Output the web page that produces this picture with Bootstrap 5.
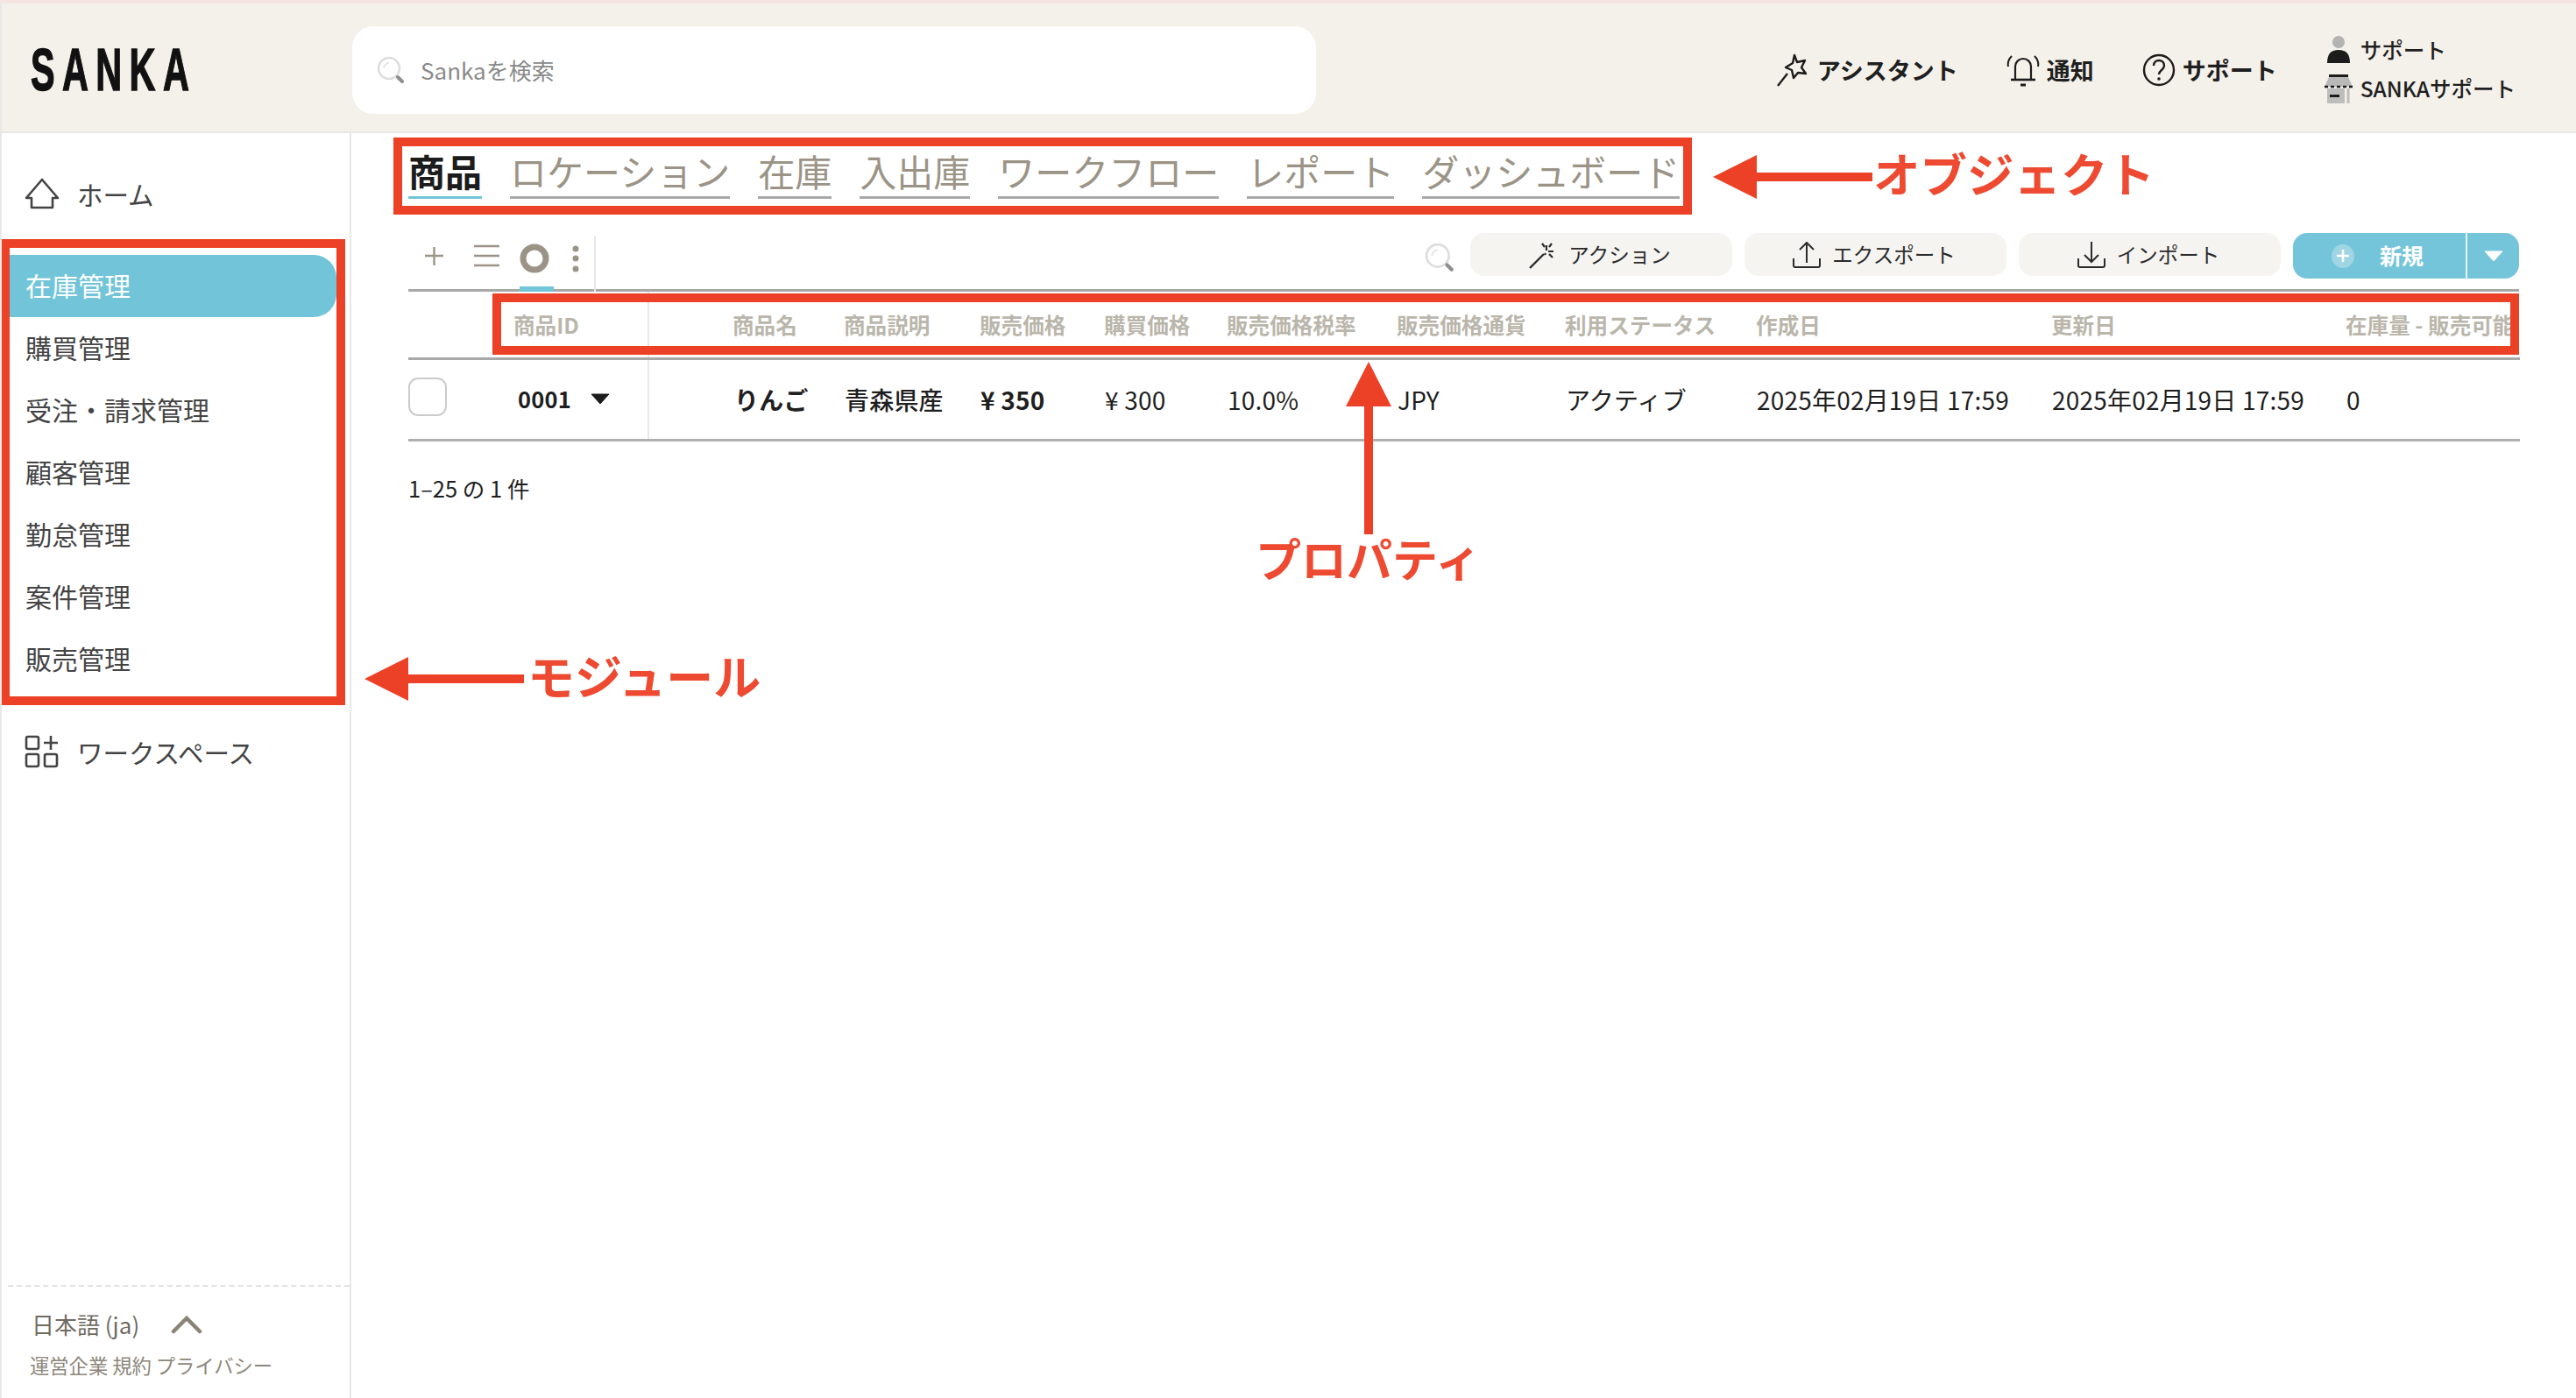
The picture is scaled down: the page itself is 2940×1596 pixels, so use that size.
<!DOCTYPE html>
<html lang="ja">
<head>
    <meta charset="UTF-8">
    <meta name="viewport" content="width=device-width, initial-scale=1.0">
    <title>Sanka</title>
    <link rel="stylesheet" href="https://cdn.jsdelivr.net/npm/bootstrap@5.3.3/dist/css/bootstrap.min.css">
    <style>
        body {
            margin: 0;
            height: 1596px;
            overflow: hidden;
            position: relative;
            background: #fff;
            color: #1f1f1f;
            font-family: "Noto Sans CJK JP", "Noto Sans", sans-serif;
            border-top: 4px solid #f6e4e0;
            border-left: 2px solid #e8e8e8;
        }

        /* header */
        .top-bar { height: 148px; background: #f4f0ea; border-bottom: 2px solid #e8e8e8; padding: 5px 69px 0 0; }
        .logo-box { width: 400px; padding-left: 33px; flex: none; }
        .logo-text {
            display: inline-block;
            font-family: "Liberation Sans Narrow", "Liberation Sans", sans-serif;
            font-weight: 700;
            font-size: 69px;
            line-height: 60px;
            letter-spacing: 14px;
            transform: scaleX(.6);
            transform-origin: left center;
            -webkit-text-stroke: 1.5px #111;
            color: #111;
            white-space: nowrap;
        }
        .search-box { width: 1100px; height: 100px; background: #fff; border-radius: 24px; padding-left: 28px; gap: 18px; color: #8a8a8a; font-size: 26px; }
        .top-links { gap: 55px; font-size: 27px; font-weight: 700; line-height: 1; white-space: nowrap; }
        .top-link { gap: 8px; }
        .user-box { margin-left: -2px; font-size: 24.5px; gap: 11px; line-height: 1; font-weight: 500; }

        /* sidebar */
        .page-body { height: 1444px; }
        .side-col { width: 399px; flex: none; border-right: 2px solid #e8e8e8; color: #444; font-size: 29.5px; }
        .home-row { height: 120px; padding-left: 26px; gap: 20px; padding-top: 18px; }
        .module-list { padding: 19px 0 0 9px; height: 534px; flex-wrap: nowrap; }
        .module-link { height: 71px; width: 373px; padding: 0 0 3px 18px; display: flex; align-items: center; color: #444; font-size: 30px; flex: none; }
        .module-link.active-one { background: #72c5d9; color: #fff; border-radius: 0 26px 26px 0; }
        .space-row { padding: 30px 0 0 26px; gap: 20px; }
        .side-foot { margin: auto 0 0 7px; border-top: 2px dashed #e2e2e2; height: 129px; padding: 26px 0 0 27px; }
        .lang-row { gap: 36px; font-size: 26px; line-height: 34px; color: #6f6b62; }
        .foot-links { font-size: 22.3px; color: #8d877b; margin-top: 14px; line-height: 30px; margin-left: -2px; }

        /* main */
        .main-col { padding: 0 65px; min-width: 0; flex: 1; }
        .obj-tabs { gap: 32px; padding-top: 22px; height: 114px; }
        .obj-tab { font-size: 42px; line-height: 42px; padding-bottom: 8px; height: 53px; color: #9b9486; border-bottom: 3px solid #a8a8a8; text-decoration: none; white-space: nowrap; }
        .obj-tab.active-tab { color: #1c1c1c; font-weight: 700; border-bottom-color: #72c5d9; }

        .tool-row { height: 67px; border-bottom: 3px solid #a8a8a8; }
        .view-tools { width: 214px; height: 64px; border-right: 2px solid #e8e8e8; margin-top: 3px; padding: 7px 0 0 17px; position: relative; }
        .view-mark { position: absolute; left: 127px; bottom: 0; width: 39px; height: 6px; background: #72c5d9; }
        .action-row { gap: 14px; }
        .act-btn { width: 299px; height: 49px; background: #f6f4f1; border: 0; border-radius: 16px; font-size: 23.5px; line-height: 1; color: #2b2b2b; gap: 12px; padding: 0 4px 0 0; }
        .act-search { margin-right: 4px; margin-top: 11px; }
        .new-split { width: 258px; height: 52px; border-radius: 16px; overflow: hidden; background: #75c5da; color: #fff; }
        .new-main { width: 199px; border-right: 2px solid #e6f4f7; gap: 29px; font-size: 25px; font-weight: 700; padding-left: 44px; }
        .plus-dot { width: 26px; height: 27px; border-radius: 50%; background: #a0d6e4; }
        .new-caret { flex: 1; }

        .item-table { table-layout: fixed; width: 2410px; margin: 0; border-collapse: collapse; white-space: nowrap; }
        .item-table th, .item-table td { padding: 0 0 0 16px; vertical-align: middle; overflow: hidden; border: 0; background: none; box-shadow: none; }
        .item-table th { height: 76px; padding-left: 15px; border-bottom: 3px solid #a8a8a8; font-size: 24.6px; font-weight: 700; color: #bab6ab; }
        .item-table td { height: 93px; border-bottom: 3px solid #b0b0b0; font-size: 28px; letter-spacing: .2px; color: #1f1f1f; }
        .item-table td.str { font-weight: 700; }
        .item-table td.mid { font-weight: 500; }
        .item-table .id-cell { border-right: 2px solid #e8e8e8; }
        .item-table td.id-cell { padding-left: 20px; font-size: 25.5px; font-weight: 700; }
        .item-table .name-cell { padding-left: 95px; }
        .item-table td.name-cell { padding-left: 97px; }
        .item-table .first-cell { padding-left: 0; }
        .row-check { width: 44px; height: 44px; border: 2px solid #cbcbcb; border-radius: 11px; margin-top: -6px; }
        .id-wrap { gap: 22px; }
        .w-a { width: 105px; } .w-b { width: 169px; } .w-c { width: 208px; } .w-d { width: 155px; }
        .w-e { width: 142px; } .w-f { width: 140px; } .w-g { width: 194px; } .w-h { width: 192px; }
        .w-i { width: 218px; } .w-j { width: 337px; } .w-k { width: 336px; } .w-l { width: 214px; }
        .page-count { font-size: 25.5px; margin-top: 36px; line-height: 34px; }

        /* annotations over the page */
        .note-box { position: absolute; border: 10px solid #ec4126; pointer-events: none; }
        .note-obj { left: 447px; top: 153px; width: 1482px; height: 88px; }
        .note-prop { left: 560px; top: 331px; width: 2313px; height: 70px; }
        .note-mod { left: -1px; top: 269px; width: 393px; height: 532px; }
        .note-text { position: absolute; color: #ee4a31; font-weight: 700; line-height: 1; white-space: nowrap; }
        .txt-obj { left: 2136px; top: 166px; font-size: 53.5px; }
        .txt-prop { left: 1431px; top: 607px; font-size: 52px; }
        .txt-mod { left: 600px; top: 740px; font-size: 54px; }
        .note-arrow { position: absolute; }
        .arr-obj { left: 1953px; top: 173px; }
        .arr-prop { left: 1533px; top: 409px; }
        .arr-mod { left: 414px; top: 746px; }
    </style>
</head>
<body>

    <!-- header -->
    <header class="top-bar d-flex align-items-center">
        <div class="logo-box"><span class="logo-text">SANKA</span></div>
        <div class="search-box d-flex align-items-center">
            <svg width="32" height="32" viewBox="0 0 32 32"><circle cx="14" cy="14" r="12" fill="none" stroke="#dddddd" stroke-width="2.5"/><path d="M8 14a6 6 0 0 1 6-6" fill="none" stroke="#e6e6e6" stroke-width="2"/><path d="M24 24l5 5" stroke="#8f8f8f" stroke-width="4" stroke-linecap="round"/></svg>
            <span>Sankaを検索</span>
        </div>
        <div class="top-links d-flex align-items-center ms-auto">
            <div class="top-link d-flex align-items-center">
                <svg width="38" height="38" viewBox="0 0 38 38"><path d="M20 2l3 8 9-2-4 8 5 7-9-1-5 6-2-9-7-3 8-5z" fill="none" stroke="#1c1c1c" stroke-width="2.4" stroke-linejoin="round"/><path d="M12 23L1 37" stroke="#1c1c1c" stroke-width="2.4"/></svg>
                <span>アシスタント</span>
            </div>
            <div class="top-link d-flex align-items-center">
                <svg width="38" height="38" viewBox="0 0 38 38"><path d="M10 29V15a9 9 0 0 1 18 0v14" fill="none" stroke="#1c1c1c" stroke-width="2.2"/><path d="M5 30h28" stroke="#1c1c1c" stroke-width="2.6"/><path d="M16 36h6" stroke="#1c1c1c" stroke-width="3"/><path d="M6 3C3 6 1 10 2 15M32 3c3 3 5 7 4 12" fill="none" stroke="#1c1c1c" stroke-width="2"/></svg>
                <span>通知</span>
            </div>
            <div class="top-link d-flex align-items-center">
                <svg width="38" height="38" viewBox="0 0 38 38"><circle cx="19" cy="19" r="17" fill="none" stroke="#1c1c1c" stroke-width="2.4"/><path d="M13 14c0-4 3-6 6-6s6 2 6 6c0 5-6 5-6 10" fill="none" stroke="#1c1c1c" stroke-width="2.4"/><circle cx="19" cy="29" r="1.8" fill="#1c1c1c"/></svg>
                <span>サポート</span>
            </div>
            <div class="user-box d-flex flex-column">
                <div class="d-flex align-items-center gap-2">
                    <svg width="34" height="32" viewBox="0 0 34 32"><circle cx="17" cy="7" r="7" fill="#b3b3b3"/><path d="M4 31c0-10 4-15 13-15s13 5 13 15z" fill="#1c1c1c"/></svg>
                    <span>サポート</span>
                </div>
                <div class="d-flex align-items-center gap-2">
                    <svg width="34" height="34" viewBox="0 0 34 34"><path d="M6 1h22v3H6z" fill="#1c1c1c"/><path d="M6 4L1 15h32L28 4z" fill="#b8b8b8"/><path d="M1 15h32" stroke="#1c1c1c" stroke-width="2.4" stroke-dasharray="4 3"/><path d="M4 17h20v17H4z" fill="#bdbdbd"/><path d="M28 17v17" stroke="#bdbdbd" stroke-width="3"/><path d="M7 24h11v3H7z" fill="#1c1c1c"/></svg>
                    <span>SANKAサポート</span>
                </div>
            </div>
        </div>
    </header>

    <div class="page-body d-flex">
        <!-- sidebar -->
        <aside class="side-col d-flex flex-column">
            <div class="home-row d-flex align-items-center">
                <svg width="40" height="36" viewBox="0 0 40 36"><path d="M20 2L38 23h-6v11H8V23H2z" fill="none" stroke="#444" stroke-width="2.6" stroke-linejoin="round"/></svg>
                <span>ホーム</span>
            </div>
            <nav class="nav flex-column module-list">
                <a class="nav-link module-link active-one" href="#">在庫管理</a>
                <a class="nav-link module-link" href="#">購買管理</a>
                <a class="nav-link module-link" href="#">受注・請求管理</a>
                <a class="nav-link module-link" href="#">顧客管理</a>
                <a class="nav-link module-link" href="#">勤怠管理</a>
                <a class="nav-link module-link" href="#">案件管理</a>
                <a class="nav-link module-link" href="#">販売管理</a>
            </nav>
            <div class="space-row d-flex align-items-center">
                <svg width="40" height="38" viewBox="0 0 40 38"><g fill="none" stroke="#444" stroke-width="2.6"><rect x="2" y="2" width="14" height="14" rx="2"/><rect x="2" y="22" width="14" height="14" rx="2"/><rect x="23" y="22" width="14" height="14" rx="2"/><path d="M30 1v16M22 9h16"/></g></svg>
                <span>ワークスペース</span>
            </div>
            <div class="side-foot">
                <div class="lang-row d-flex align-items-center">
                    <span>日本語 (ja)</span>
                    <svg width="36" height="22" viewBox="0 0 36 22"><path d="M3 19L18 4l15 15" fill="none" stroke="#8a8376" stroke-width="4.5" stroke-linecap="round"/></svg>
                </div>
                <div class="foot-links">運営企業 規約 プライバシー</div>
            </div>
        </aside>

        <!-- main -->
        <main class="main-col">
            <div class="obj-tabs d-flex">
                <a class="obj-tab active-tab" href="#">商品</a>
                <a class="obj-tab" href="#">ロケーション</a>
                <a class="obj-tab" href="#">在庫</a>
                <a class="obj-tab" href="#">入出庫</a>
                <a class="obj-tab" href="#">ワークフロー</a>
                <a class="obj-tab" href="#">レポート</a>
                <a class="obj-tab" href="#">ダッシュボード</a>
            </div>

            <div class="tool-row d-flex justify-content-between">
                <div class="view-tools d-flex align-items-start">
                    <svg width="178" height="46" viewBox="0 0 178 46"><g stroke="#9b9486" fill="none"><path d="M2 16h21M12.500 6v21" stroke-width="2.400"/><path d="M58 5h29M58 16h29M58 27h29" stroke-width="2.600"/><ellipse cx="127" cy="19" rx="13" ry="13" stroke-width="7"/></g><g fill="#9b9486"><circle cx="174" cy="8" r="3.500"/><circle cx="174" cy="19" r="3.500"/><circle cx="174" cy="31" r="3.500"/></g></svg>
                    <div class="view-mark"></div>
                </div>
                <div class="action-row d-flex align-items-start">
                    <svg class="act-search" width="34" height="34" viewBox="0 0 32 32"><circle cx="14" cy="14" r="12" fill="none" stroke="#dddddd" stroke-width="2.500"/><path d="M8 14a6 6 0 0 1 6-6" fill="none" stroke="#e6e6e6" stroke-width="2"/><path d="M24 24l5 5" stroke="#8f8f8f" stroke-width="4" stroke-linecap="round"/></svg>
                    <button class="btn act-btn d-flex align-items-center justify-content-center">
                        <svg width="34" height="32" viewBox="0 0 34 32"><path d="M2 31L18 15" stroke="#2b2b2b" stroke-width="2.400"/><path d="M21 5v6M16 3l3 4M27 3l-3 4M29 12h-6M28 19l-4-4M19 16l1-2" stroke="#2b2b2b" stroke-width="2.200" fill="none"/></svg>
                        <span>アクション</span>
                    </button>
                    <button class="btn act-btn d-flex align-items-center justify-content-center">
                        <svg width="34" height="30" viewBox="0 0 34 30"><path d="M17 24V2M9 9l8-8 8 8" fill="none" stroke="#2b2b2b" stroke-width="2"/><path d="M2 19v8a2 2 0 0 0 2 2h26a2 2 0 0 0 2-2v-8" fill="none" stroke="#2b2b2b" stroke-width="2"/></svg>
                        <span>エクスポート</span>
                    </button>
                    <button class="btn act-btn d-flex align-items-center justify-content-center">
                        <svg width="34" height="30" viewBox="0 0 34 30"><path d="M17 0v22M9 15l8 8 8-8" fill="none" stroke="#2b2b2b" stroke-width="2"/><path d="M2 19v8a2 2 0 0 0 2 2h26a2 2 0 0 0 2-2v-8" fill="none" stroke="#2b2b2b" stroke-width="2"/></svg>
                        <span>インポート</span>
                    </button>
                    <div class="new-split d-flex">
                        <div class="new-main d-flex align-items-center">
                            <span class="plus-dot d-flex align-items-center justify-content-center">
                                <svg width="16" height="16" viewBox="0 0 16 16"><path d="M8 1v14M1 8h14" stroke="#fff" stroke-width="2.500"/></svg>
                            </span>
                            <span>新規</span>
                        </div>
                        <div class="new-caret d-flex align-items-center justify-content-center">
                            <svg width="22" height="13" viewBox="0 0 22 13"><path d="M1 1h20L11 12z" fill="#fff" stroke="#fff" stroke-linejoin="round"/></svg>
                        </div>
                    </div>
                </div>
            </div>

            <table class="table item-table">
                <thead>
                    <tr>
                        <th class="w-a first-cell"></th>
                        <th class="w-b id-cell">商品ID</th>
                        <th class="w-c name-cell">商品名</th>
                        <th class="w-d">商品説明</th>
                        <th class="w-e">販売価格</th>
                        <th class="w-f">購買価格</th>
                        <th class="w-g">販売価格税率</th>
                        <th class="w-h">販売価格通貨</th>
                        <th class="w-i">利用ステータス</th>
                        <th class="w-j">作成日</th>
                        <th class="w-k">更新日</th>
                        <th class="w-l">在庫量 - 販売可能</th>
                    </tr>
                </thead>
                <tbody>
                    <tr>
                        <td class="first-cell"><div class="row-check"></div></td>
                        <td class="id-cell">
                            <div class="id-wrap d-flex align-items-center">
                                <span>0001</span>
                                <svg width="22" height="13" viewBox="0 0 22 13"><path d="M1 1h20L11 12z" fill="#1c1c1c" stroke="#1c1c1c" stroke-linejoin="round"/></svg>
                            </div>
                        </td>
                        <td class="name-cell str">りんご</td>
                        <td class="mid">青森県産</td>
                        <td class="str">¥ 350</td>
                        <td>¥ 300</td>
                        <td>10.0%</td>
                        <td>JPY</td>
                        <td>アクティブ</td>
                        <td>2025年02月19日 17:59</td>
                        <td>2025年02月19日 17:59</td>
                        <td>0</td>
                    </tr>
                </tbody>
            </table>
            <div class="page-count">1–25 の 1 件</div>
        </main>
    </div>

    <!-- red annotations -->
    <div class="note-box note-obj"></div>
    <div class="note-box note-prop"></div>
    <div class="note-box note-mod"></div>

    <svg class="note-arrow arr-obj" width="184" height="50" viewBox="0 0 184 50"><path d="M0 25L50 0v20h132v10H50v20z" fill="#ec4126"/></svg>
    <svg class="note-arrow arr-prop" width="54" height="198" viewBox="0 0 54 198"><path d="M27 0l26 51H32v146H22V51H1z" fill="#ec4126"/></svg>
    <svg class="note-arrow arr-mod" width="184" height="50" viewBox="0 0 184 50"><path d="M0 25L50 0v20h132v10H50v20z" fill="#ec4126"/></svg>

    <div class="note-text txt-obj">オブジェクト</div>
    <div class="note-text txt-prop">プロパティ</div>
    <div class="note-text txt-mod">モジュール</div>

    <script src="https://cdn.jsdelivr.net/npm/bootstrap@5.3.3/dist/js/bootstrap.bundle.min.js"></script>
</body>
</html>
